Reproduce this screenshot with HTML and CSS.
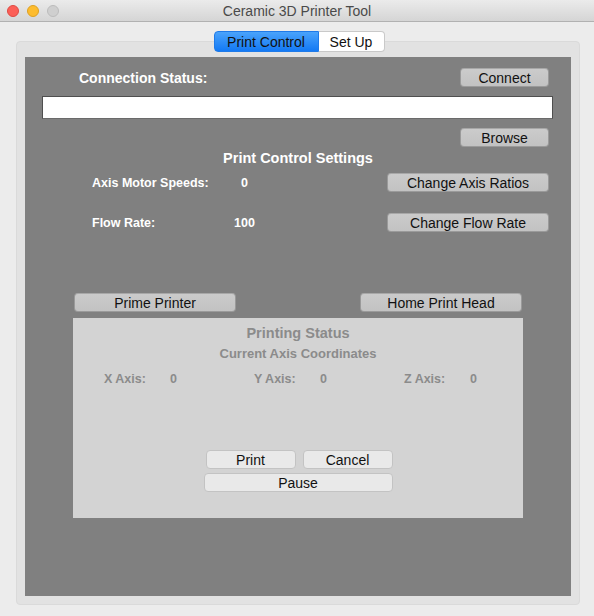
FILE: index.html
```html
<!DOCTYPE html>
<html>
<head>
<meta charset="utf-8">
<link rel="stylesheet" href="styles.css">
</head>
<body>
<div class="titlebar">
  <div class="lights"><span class="light red"></span><span class="light yellow"></span><span class="light gray"></span></div>
  <div class="title">Ceramic 3D Printer Tool</div>
</div>
<div class="window">
  <div class="tabs"><span class="tab active">Print Control</span><span class="tab">Set Up</span></div>
  <div class="box">
    <div class="panel">
      <div class="row row-conn">
        <div class="conn-label">Connection Status:</div>
        <button class="btn btn-dark w89">Connect</button>
      </div>
      <div class="field"></div>
      <div class="row row-browse"><button class="btn btn-dark w89">Browse</button></div>
      <div class="section-title">Print Control Settings</div>
      <div class="row row-setting first">
        <div class="s-label">Axis Motor Speeds:</div>
        <div class="s-value">0</div>
        <button class="btn btn-dark w162">Change Axis Ratios</button>
      </div>
      <div class="row row-setting">
        <div class="s-label">Flow Rate:</div>
        <div class="s-value v100">100</div>
        <button class="btn btn-dark w162">Change Flow Rate</button>
      </div>
      <div class="row row-prime">
        <button class="btn btn-dark w162">Prime Printer</button>
        <button class="btn btn-dark w162">Home Print Head</button>
      </div>
      <div class="status">
        <div class="st-title">Printing Status</div>
        <div class="st-sub">Current Axis Coordinates</div>
        <div class="axes">
          <div class="axis"><span class="a-label">X Axis:</span><span class="a-val">0</span></div>
          <div class="axis"><span class="a-label">Y Axis:</span><span class="a-val">0</span></div>
          <div class="axis"><span class="a-label">Z Axis:</span><span class="a-val">0</span></div>
        </div>
        <div class="controls">
          <div class="ctl-row">
            <button class="btn btn-light w90">Print</button>
            <button class="btn btn-light w90">Cancel</button>
          </div>
          <button class="btn btn-light w189">Pause</button>
        </div>
      </div>
    </div>
  </div>
</div>
</body>
</html>
```
FILE: styles.css
```css
* { box-sizing: border-box; }
html, body { margin: 0; padding: 0; }
body {
  width: 594px;
  height: 616px;
  background: #ececec;
  font-family: "Liberation Sans", Arial, sans-serif;
  font-size: 13px;
  color: #111;
  overflow: hidden;
}
.titlebar {
  height: 22px;
  background: linear-gradient(#ebebeb, #d5d5d5);
  border-bottom: 1px solid #b1b1b1;
  display: flex;
  align-items: center;
  justify-content: center;
  position: relative;
}
.lights {
  position: absolute;
  left: 7px;
  top: 5px;
  display: flex;
  gap: 8px;
}
.light {
  width: 12px;
  height: 12px;
  border-radius: 50%;
  display: block;
}
.light.red { background: #fc5f57; border: 1px solid #de4a43; }
.light.yellow { background: #fdbc2e; border: 1px solid #dea122; }
.light.gray { background: #cfcfcf; border: 1px solid #bcbcbc; }
.title {
  font-size: 14px;
  color: #4a4a4a;
  padding-top: 1px;
}
.window {
  padding: 9px 14px 0 16px;
  position: relative;
}
.tabs {
  display: flex;
  justify-content: center;
  height: 21px;
  position: relative;
  z-index: 2;
  margin-left: 2px;
}
.tab {
  display: flex;
  align-items: center;
  justify-content: center;
  height: 21px;
  background: #fff;
  border: 1px solid #c9c9c9;
  font-size: 14px;
  color: #111;
}
.tab.active {
  width: 105px;
  background: linear-gradient(#4aa3fb, #1379f4);
  border-color: #1f7ae8;
  border-radius: 4px 0 0 4px;
}
.tab:last-child {
  width: 66px;
  border-left: none;
  border-radius: 0 4px 4px 0;
}
.box {
  margin-top: -11px;
  width: 564px;
  height: 564px;
  background: #e2e2e2;
  border: 1px solid #dadada;
  border-radius: 4px;
  padding: 15px 8px 8px 8px;
}
.panel {
  background: #808080;
  width: 546px;
  height: 539px;
  padding-top: 11px;
  position: relative;
}
.row { display: flex; align-items: center; }
.btn {
  font-family: "Liberation Sans", Arial, sans-serif;
  font-size: 14px;
  color: #111;
  height: 19px;
  padding: 0;
  border-radius: 4px;
  display: flex;
  align-items: center;
  justify-content: center;
}
.btn-dark {
  background: linear-gradient(#cbcbcb, #c2c2c2);
  border: 1px solid #9a9a9a;
  border-top-color: #a8a8a8;
}
.btn-light {
  background: #e9e9e9;
  border: 1px solid #c3c3c3;
}
.w89 { width: 89px; }
.w90 { width: 90px; }
.w162 { width: 162px; }
.w189 { width: 189px; }
.row-conn { height: 19px; }
.conn-label {
  margin-left: 54px;
  width: 381px;
  font-weight: bold;
  font-size: 14px;
  color: #fff;
  padding-top: 1px;
}
.field {
  margin: 9px 0 0 17px;
  width: 511px;
  height: 23px;
  background: #fff;
  border: 1px solid #4f4f4f;
  border-bottom-color: #6a6a6a;
}
.row-browse { margin-top: 9px; padding-left: 435px; height: 19px; }
.section-title {
  margin-top: 3px;
  text-align: center;
  font-weight: bold;
  font-size: 14.5px;
  color: #fff;
  height: 16px;
  line-height: 16px;
}
.row-setting { height: 19px; margin-top: 21px; }
.row-setting.first { margin-top: 7px; }
.s-label {
  margin-left: 67px;
  width: 149px;
  font-weight: bold;
  font-size: 12.5px;
  color: #fff;
}
.s-value {
  width: 146px;
  font-weight: bold;
  font-size: 12.5px;
  color: #fff;
}
.s-value.v100 { margin-left: -7px; width: 153px; }
.row-prime {
  margin-top: 61px;
  height: 19px;
  padding-left: 49px;
  gap: 124px;
}
.status {
  margin: 6px 0 0 48px;
  width: 450px;
  height: 200px;
  background: #d3d3d3;
  color: #8b8b8b;
  padding-top: 7px;
}
.st-title {
  text-align: center;
  font-weight: bold;
  font-size: 14.5px;
  height: 17px;
  line-height: 17px;
}
.st-sub {
  margin-top: 4px;
  text-align: center;
  font-weight: bold;
  font-size: 13px;
  height: 15px;
  line-height: 15px;
}
.axes {
  display: flex;
  margin-top: 11px;
  font-weight: bold;
  font-size: 12.5px;
  height: 15px;
  line-height: 15px;
}
.axis { width: 150px; display: flex; }
.a-label { margin-left: 31px; width: 66px; }
.controls {
  margin-top: 63px;
  display: flex;
  flex-direction: column;
  align-items: center;
  gap: 4px;
}
.ctl-row { display: flex; gap: 7px; margin-left: 2px; }
```
